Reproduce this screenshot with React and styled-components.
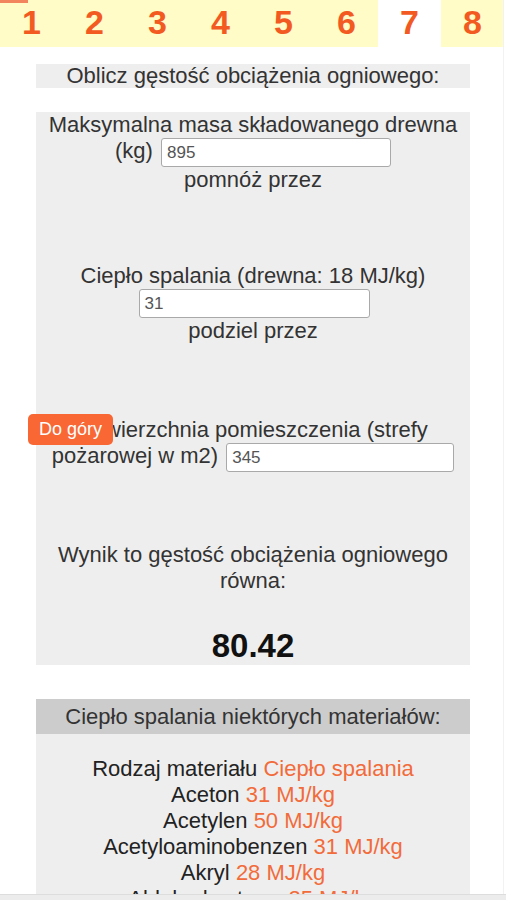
import React from "react";
import styled, { createGlobalStyle } from "styled-components";

const Global = createGlobalStyle`
  html, body { margin: 0; padding: 0; background: #ffffff; }
  body { font-family: "Liberation Sans", Arial, sans-serif; color: #333333; }
`;

const Page = styled.div`
  position: relative;
  width: 506px;
  padding-bottom: 40px;
`;

const TopMark = styled.div`
  position: absolute;
  left: 0;
  top: 0;
  width: 28px;
  height: 3px;
  background: #f3855e;
`;

const Tabs = styled.nav`
  display: flex;
  width: 504px;
  height: 47px;
`;

const Tab = styled.div`
  flex: 1 1 0;
  height: 44px;
  padding-bottom: 3px;
  line-height: 44px;
  text-align: center;
  font-size: 34px;
  font-weight: 700;
  color: #f25a22;
  background: ${(p) => (p.$active ? "#ffffff" : "#fffcc8")};
`;

const Title = styled.div`
  width: 434px;
  margin: 17px auto 0;
  height: 24px;
  line-height: 24px;
  background: #eeeeee;
  text-align: center;
  font-size: 22px;
`;

const Panel = styled.div`
  width: 434px;
  margin: 24px auto 0;
  background: #eeeeee;
  text-align: center;
  font-size: 22px;
  line-height: 26px;
`;

const Field = styled.div`
  margin-top: ${(p) => p.$gap || 0}px;
`;

const Caption = styled.div``;

const Input = styled.input`
  box-sizing: border-box;
  width: ${(p) => p.$w}px;
  height: 29px;
  margin: 0 0 0 2px;
  padding: 0 5px;
  vertical-align: middle;
  border: 1px solid #a9a9a9;
  border-radius: 3px;
  background: #ffffff;
  font-family: "Liberation Sans", Arial, sans-serif;
  font-size: 17px;
  color: #555555;
  outline: none;
`;

const Result = styled.div`
  margin-top: 33px;
  font-size: 33px;
  font-weight: 700;
  line-height: 38px;
  color: #111111;
`;

const TableHead = styled.div`
  width: 434px;
  margin: 34px auto 0;
  height: 35px;
  line-height: 35px;
  background: #cccccc;
  text-align: center;
  font-size: 22px;
`;

const TableBody = styled.div`
  width: 434px;
  margin: 0 auto;
  padding-top: 22px;
  padding-bottom: 20px;
  background: #eeeeee;
  text-align: center;
  font-size: 22px;
  line-height: 26px;
  color: #222222;
`;

const Row = styled.div``;

const Value = styled.span`
  color: #f26b3a;
`;

const UpButton = styled.button`
  position: fixed;
  left: 28px;
  top: 414px;
  width: 85px;
  height: 31px;
  padding: 0;
  border: none;
  border-radius: 5px;
  background: #f86734;
  color: #ffffff;
  font-family: "Liberation Sans", Arial, sans-serif;
  font-size: 18px;
  line-height: 31px;
  text-align: center;
`;

const BottomBar = styled.div`
  position: fixed;
  left: 0;
  right: 0;
  bottom: 0;
  height: 5px;
  background: #ececec;
  border-top: 1px solid #dddddd;
`;

const EdgeLine = styled.div`
  position: fixed;
  top: 0;
  bottom: 0;
  left: 503px;
  width: 1px;
  background: #f2f2f2;
`;

const materials = [
  ["Rodzaj materiału", "Ciepło spalania"],
  ["Aceton", "31 MJ/kg"],
  ["Acetylen", "50 MJ/kg"],
  ["Acetyloaminobenzen", "31 MJ/kg"],
  ["Akryl", "28 MJ/kg"],
  ["Aldehyd octowy", "25 MJ/kg"],
  ["Alkohol etylowy", "27 MJ/kg"],
  ["Alkohol metylowy", "20 MJ/kg"],
];

export default function App() {
  return (
    <Page>
      <Global />
      <Tabs>
        {[1, 2, 3, 4, 5, 6, 7, 8].map((n) => (
          <Tab key={n} $active={n === 7}>
            {n}
          </Tab>
        ))}
      </Tabs>
      <TopMark />
      <Title>Oblicz gęstość obciążenia ogniowego:</Title>
      <Panel>
        <Field>
          Maksymalna masa składowanego drewna (kg) <Input $w={230} defaultValue="895" />
          <Caption>pomnóż przez</Caption>
        </Field>
        <Field $gap={70}>
          Ciepło spalania (drewna: 18 MJ/kg) <Input $w={231} defaultValue="31" />
          <Caption>podziel przez</Caption>
        </Field>
        <Field $gap={73}>
          Powierzchnia pomieszczenia (strefy pożarowej w m2) <Input $w={228} defaultValue="345" />
        </Field>
        <Field $gap={70}>Wynik to gęstość obciążenia ogniowego równa:</Field>
        <Result>80.42</Result>
      </Panel>
      <TableHead>Ciepło spalania niektórych materiałów:</TableHead>
      <TableBody>
        {materials.map(([name, val]) => (
          <Row key={name}>
            {name} <Value>{val}</Value>
          </Row>
        ))}
      </TableBody>
      <UpButton>Do góry</UpButton>
      <EdgeLine />
      <BottomBar />
    </Page>
  );
}
